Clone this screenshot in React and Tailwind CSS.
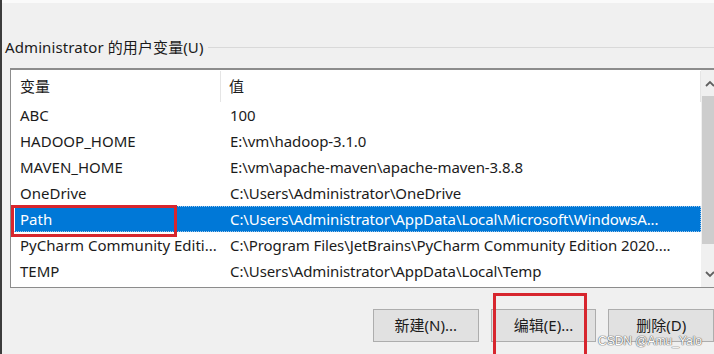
import React from "react";

const rows = [
	["ABC", "100"],
	["HADOOP_HOME", "E:\\vm\\hadoop-3.1.0"],
	["MAVEN_HOME", "E:\\vm\\apache-maven\\apache-maven-3.8.8"],
	["OneDrive", "C:\\Users\\Administrator\\OneDrive"],
	["Path", "C:\\Users\\Administrator\\AppData\\Local\\Microsoft\\WindowsA..."],
	["PyCharm Community Editi...", "C:\\Program Files\\JetBrains\\PyCharm Community Edition 2020...."],
	["TEMP", "C:\\Users\\Administrator\\AppData\\Local\\Temp"],
];

const font = "font-['Noto_Sans','Noto_Sans_CJK_SC',sans-serif]";

const Chevron = ({ up }) => (
	<svg width="10" height="7" viewBox="0 0 10 7">
		<path
			d={up ? "M1 6 L5 2 L9 6" : "M1 1 L5 5 L9 1"}
			fill="none"
			stroke="#606060"
			strokeWidth="1.8"
		/>
	</svg>
);

const Button = ({ children }) => (
	<div className="w-[107px] h-[33px] flex items-center justify-center bg-[#e1e1e1] border border-[#adadad] text-[15px] text-[#1b1b1b]">
		{children}
	</div>
);

const App = () => {
	return (
		<div className={`relative w-[714px] h-[354px] overflow-hidden bg-[#f0f0f0] border-l-2 border-[#3c3c3c] ${font}`}>
			<div className="h-[3px] bg-[#fafafa]" />

			{/* group label */}
			<div className="flex items-center mt-[35px] pl-[3px]">
				<span className="text-[15px] leading-[18px] text-[#1b1b1b] whitespace-nowrap tracking-[0.1px]">
					Administrator 的用户变量(U)
				</span>
				<div className="flex-1 h-px bg-[#d9d9d9] ml-[4px]" />
			</div>

			{/* list view */}
			<div className="ml-[8px] mt-[12px] w-[712px] h-[220px] bg-white border border-[#8c8c8c] border-t-2 flex">
				<div className="flex-1 flex flex-col pl-[2px] pt-px">
					<div className="h-[31px] flex items-center text-[15px] text-[#1b1b1b]">
						<div className="w-[208px] pl-[7px] h-full flex items-center border-r border-[#e5e5e5]">变量</div>
						<div className="flex-1 pl-[8px] h-full flex items-center border-r border-[#e5e5e5]">值</div>
					</div>
					{rows.map(([name, value]) => {
						const sel = name === "Path";
						return (
							<div
								key={name}
								className={`h-[26px] flex items-center text-[15px] whitespace-nowrap ${
									sel
										? "bg-[#0078d7] text-white border-l-2 border-white outline-1 outline-dotted outline-[#9fc6ea] -outline-offset-1"
										: "text-[#1b1b1b]"
								}`}
							>
								<div className={`${sel ? "w-[206px] pl-[5px]" : "w-[208px] pl-[7px]"} overflow-hidden`}>{name}</div>
								<div className="flex-1 pl-[9px] overflow-hidden tracking-[-0.1px]">{value}</div>
							</div>
						);
					})}
				</div>

				{/* scrollbar */}
				<div className="w-[18px] mr-[2px] bg-[#f0f0f0] flex flex-col">
					<div className="h-[26px] flex items-center justify-center">
						<Chevron up />
					</div>
					<div className="h-[148px] mx-px bg-[#cdcdcd]" />
					<div className="flex-1" />
					<div className="h-[26px] flex items-center justify-center">
						<Chevron />
					</div>
				</div>
			</div>

			{/* buttons */}
			<div className="flex gap-[12px] mt-[21px] ml-[371px]">
				<Button>新建(N)...</Button>
				<Button>编辑(E)...</Button>
				<Button>删除(D)</Button>
			</div>

			{/* annotations */}
			<div className="absolute left-[9px] top-[205px] w-[166px] h-[32px] border-[3px] border-[#d7262e]" />
			<div className="absolute left-[491px] top-[293px] w-[94px] h-[70px] border-[3px] border-[#d7262e]" />
			<div className="absolute left-[596px] top-[333px] text-[12px] leading-[16px] text-white [text-shadow:0_0_1px_#666,0_0_1px_#666,0_0_1px_#666] font-['Liberation_Sans',sans-serif]">
				CSDN @Amu_Yalo
			</div>
		</div>
	);
};

export default App;
